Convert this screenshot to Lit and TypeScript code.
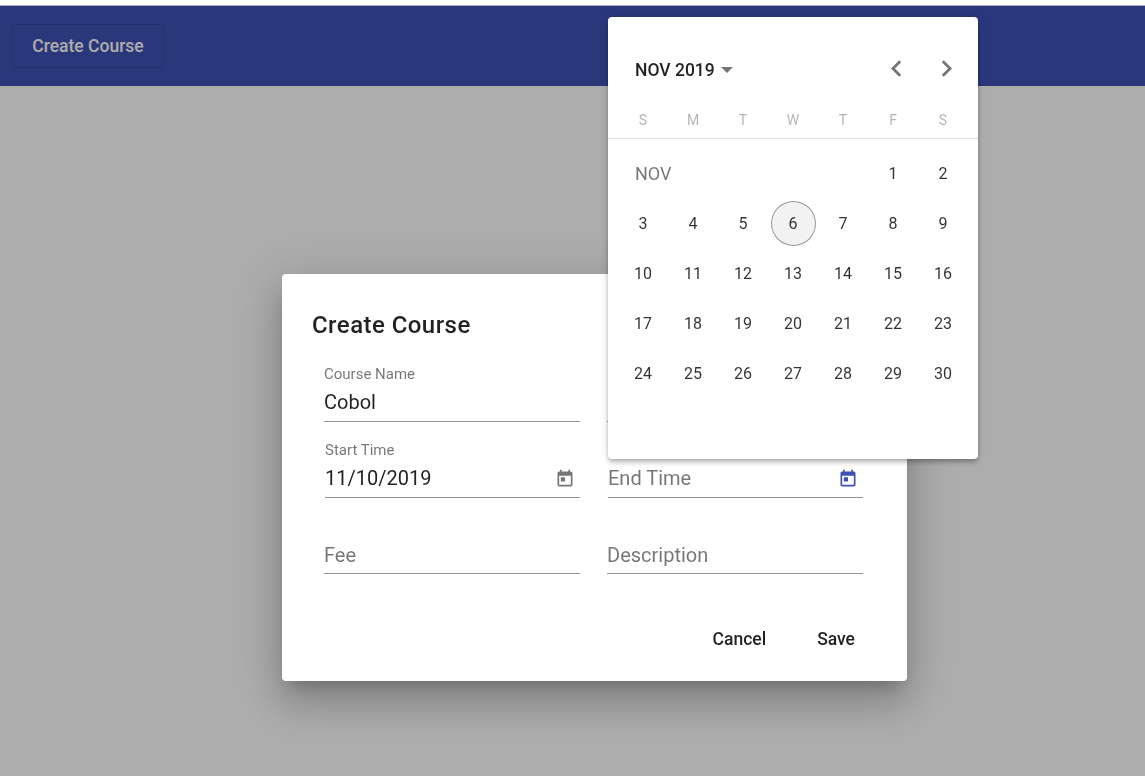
import { LitElement, html, css, svg } from "lit";
import { customElement } from "lit/decorators.js";

const calIcon = svg`<path d="M19 3h-1V1h-2v2H8V1H6v2H5c-1.11 0-1.99.9-1.99 2L3 19c0 1.1.89 2 2 2h14c1.1 0 2-.9 2-2V5c0-1.1-.9-2-2-2zm0 16H5V8h14v11zM7 10h5v5H7z"/>`;

const weeks: (number | string | null)[][] = [
  ["NOV", null, null, null, null, 1, 2],
  [3, 4, 5, 6, 7, 8, 9],
  [10, 11, 12, 13, 14, 15, 16],
  [17, 18, 19, 20, 21, 22, 23],
  [24, 25, 26, 27, 28, 29, 30],
];

@customElement("app-root")
export class AppRoot extends LitElement {
  static styles = css`
    :host {
      display: block;
      position: relative;
      height: 776px;
      overflow: hidden;
      background: #fff;
      font-family: Roboto, "Liberation Sans", sans-serif;
      color: rgba(0, 0, 0, 0.87);
    }
    .bar {
      margin-top: 6px;
      height: 80px;
      background: #3f51b5;
      box-shadow: 0 -1px 0 #a9aecb;
      display: flex;
      align-items: center;
      padding-left: 12px;
    }
    .bar-btn {
      width: 152px;
      height: 44px;
      box-sizing: border-box;
      border: 1px solid rgba(0, 0, 0, 0.12);
      border-radius: 4px;
      display: flex;
      align-items: center;
      justify-content: center;
      background: #3f51b5;
      color: #fff;
      font-size: 17.5px;
      font-weight: 500;
    }
    .backdrop {
      position: absolute;
      inset: 6px 0 0 0;
      background: rgba(0, 0, 0, 0.32);
    }
    .page {
      height: 690px;
      background: #ffffff;
    }
    .dialog {
      position: absolute;
      left: 282px;
      top: 274px;
      width: 625px;
      height: 407px;
      box-sizing: border-box;
      background: #fff;
      border-radius: 4px;
      padding: 35px 30px 0;
      will-change: transform;
      box-shadow: 0 11px 15px -7px rgba(0, 0, 0, 0.2),
        0 24px 38px 3px rgba(0, 0, 0, 0.14),
        0 9px 46px 8px rgba(0, 0, 0, 0.12);
    }
    h2 {
      margin: 0;
      font-size: 24px;
      line-height: 32px;
      font-weight: 500;
      letter-spacing: 0.45px;
      color: rgba(0, 0, 0, 0.87);
    }
    .grid {
      display: grid;
      grid-template-columns: 256px 256px;
      column-gap: 27px;
      grid-auto-rows: 76px;
      margin-left: 12px;
      padding-top: 15px;
    }
    .field {
      position: relative;
      height: 35px;
      padding: 23px 0 7px;
      border-bottom: 1px solid #949494;
      display: flex;
      align-items: flex-end;
      justify-content: space-between;
      font-size: 20px;
      line-height: 24px;
    }
    .date {
      margin-left: 1px;
    }
    .low {
      height: 36px;
      padding-bottom: 6px;
    }
    .label {
      position: absolute;
      left: 0;
      top: 9px;
      font-size: 15px;
      line-height: 18px;
      color: rgba(0, 0, 0, 0.54);
    }
    .value {
      color: rgba(0, 0, 0, 0.87);
    }
    .placeholder {
      color: rgba(0, 0, 0, 0.54);
    }
    .field svg {
      width: 20px;
      height: 20px;
      fill: rgba(0, 0, 0, 0.54);
      margin-right: 5px;
      margin-bottom: 1px;
      flex: none;
    }
    .field svg.on {
      fill: #3f51b5;
    }
    .actions {
      display: flex;
      justify-content: flex-end;
      gap: 51px;
      margin: 43px 22px 0 0;
      font-size: 17.5px;
      font-weight: 500;
      line-height: 24px;
    }
    .calendar {
      position: absolute;
      left: 608px;
      top: 17px;
      width: 370px;
      height: 442px;
      background: #fff;
      border-radius: 4px;
      will-change: transform;
      box-shadow: 0 2px 4px -1px rgba(0, 0, 0, 0.2),
        0 4px 5px 0 rgba(0, 0, 0, 0.14),
        0 1px 10px 0 rgba(0, 0, 0, 0.12);
    }
    .cal-head {
      height: 94px;
      box-sizing: border-box;
      padding: 41px 15px 0 27px;
      display: flex;
      align-items: flex-start;
      justify-content: space-between;
    }
    .period {
      display: flex;
      align-items: center;
      font-size: 17.5px;
      font-weight: 500;
      line-height: 24px;
    }
    .caret {
      width: 0;
      height: 0;
      margin-left: 6px;
      border-left: 6.5px solid transparent;
      border-right: 6.5px solid transparent;
      border-top: 6px solid rgba(0, 0, 0, 0.54);
    }
    .nav {
      display: flex;
      gap: 17px;
      margin-top: -6px;
    }
    .nav svg {
      width: 33px;
      height: 33px;
      display: block;
      fill: rgba(0, 0, 0, 0.54);
    }
    .dow,
    .week {
      display: grid;
      grid-template-columns: repeat(7, 50px);
      padding: 0 10px;
      text-align: center;
    }
    .dow {
      height: 18px;
      font-size: 14px;
      line-height: 18px;
      color: rgba(0, 0, 0, 0.3);
    }
    .rule {
      height: 1px;
      margin: 9px 0;
      background: rgba(0, 0, 0, 0.12);
    }
    .week {
      height: 50px;
      font-size: 16px;
      color: rgba(0, 0, 0, 0.8);
    }
    .cell {
      display: flex;
      align-items: center;
      justify-content: center;
    }
    .month {
      justify-content: flex-start;
      padding-left: 17px;
      font-size: 18px;
      color: rgba(0, 0, 0, 0.54);
    }
    .today {
      width: 45px;
      height: 45px;
      box-sizing: border-box;
      border-radius: 50%;
      border: 1px solid rgba(0, 0, 0, 0.38);
      background: rgba(0, 0, 0, 0.05);
    }
  `;

  private field(label: string | null, text: string, isValue: boolean, cls = "", icon = "") {
    return html`<div class="field ${cls}">
      ${label ? html`<span class="label">${label}</span>` : ""}
      <span class=${isValue ? "value" : "placeholder"}>${text}</span>
      ${icon
        ? html`<svg class=${icon === "on" ? "on" : ""} viewBox="0 0 24 24">${calIcon}</svg>`
        : ""}
    </div>`;
  }

  render() {
    return html`
      <div class="bar"><div class="bar-btn">Create Course</div></div>
      <div class="page"></div>
      <div class="backdrop"></div>
      <div class="dialog">
        <h2>Create Course</h2>
        <div class="grid">
          ${this.field("Course Name", "Cobol", true)}
          ${this.field(null, "", true)}
          ${this.field("Start Time", "11/10/2019", true, "date", "off")}
          ${this.field(null, "End Time", false, "date", "on")}
          ${this.field(null, "Fee", false, "low")}
          ${this.field(null, "Description", false, "low")}
        </div>
        <div class="actions"><span>Cancel</span><span>Save</span></div>
      </div>
      <div class="calendar">
        <div class="cal-head">
          <div class="period">NOV 2019<span class="caret"></span></div>
          <div class="nav">
            <svg viewBox="0 0 24 24"><path d="M15.41 7.41 14 6l-6 6 6 6 1.41-1.41L10.83 12z"/></svg>
            <svg viewBox="0 0 24 24"><path d="M10 6 8.59 7.41 13.17 12l-4.58 4.59L10 18l6-6z"/></svg>
          </div>
        </div>
        <div class="dow">
          ${["S", "M", "T", "W", "T", "F", "S"].map((d) => html`<span>${d}</span>`)}
        </div>
        <div class="rule"></div>
        ${weeks.map(
          (w) => html`<div class="week">
            ${w.map((d) =>
              d === "NOV"
                ? html`<div class="cell month">${d}</div>`
                : d === 6
                  ? html`<div class="cell"><div class="cell today">${d}</div></div>`
                  : html`<div class="cell">${d ?? ""}</div>`
            )}
          </div>`
        )}
      </div>
    `;
  }
}
